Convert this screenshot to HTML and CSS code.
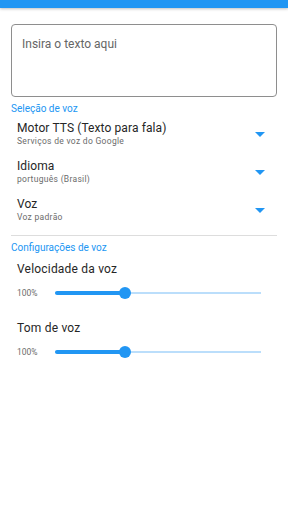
FILE: index.html
```html
<!DOCTYPE html>
<html lang="pt-BR">
<head>
    <meta charset="UTF-8">
    <meta name="viewport" content="width=device-width, initial-scale=1.0">
    <title>Texto para fala</title>
    <link rel="stylesheet" href="styles.css">
</head>
<body>
    <div class="top-bar"></div>

    <div class="content">
        <div class="text-box">
            <span class="placeholder">Insira o texto aqui</span>
        </div>

        <div class="section-title">Seleção de voz</div>

        <div class="select-item">
            <div class="select-text">
                <div class="select-title">Motor TTS (Texto para fala)</div>
                <div class="select-sub">Serviços de voz do Google</div>
            </div>
            <span class="arrow"></span>
        </div>
        <div class="select-item">
            <div class="select-text">
                <div class="select-title">Idioma</div>
                <div class="select-sub">português (Brasil)</div>
            </div>
            <span class="arrow"></span>
        </div>
        <div class="select-item">
            <div class="select-text">
                <div class="select-title">Voz</div>
                <div class="select-sub">Voz padrão</div>
            </div>
            <span class="arrow"></span>
        </div>

        <div class="divider"></div>

        <div class="section-title">Configurações de voz</div>

        <div class="slider-block first">
            <div class="slider-label">Velocidade da voz</div>
            <div class="slider-row">
                <span class="slider-value">100%</span>
                <div class="slider">
                    <div class="track-active" style="width: 34%"></div>
                    <div class="thumb" style="left: 34%"></div>
                </div>
            </div>
        </div>

        <div class="slider-block">
            <div class="slider-label">Tom de voz</div>
            <div class="slider-row">
                <span class="slider-value">100%</span>
                <div class="slider">
                    <div class="track-active" style="width: 34%"></div>
                    <div class="thumb" style="left: 34%"></div>
                </div>
            </div>
        </div>
    </div>
</body>
</html>
```

FILE: styles.css
```css
body {
    margin: 0;
    background: #fff;
    font-family: Roboto, 'Noto Sans', sans-serif;
    color: #212121;
}
.top-bar {
    height: 8px;
    background: #2196f3;
    box-shadow: 0 1px 3px rgba(0,0,0,0.25);
}
.content {
    padding: 16px 11px 0 11px;
}
.text-box {
    height: 73px;
    border: 1px solid #8e8e8e;
    border-radius: 4px;
    padding: 8px 10px;
    box-sizing: border-box;
}
.placeholder {
    font-size: 12px;
    line-height: 16px;
    color: #666;
}
.section-title {
    font-size: 10px;
    line-height: 12px;
    color: #2196f3;
    margin-top: 6px;
}
.select-item {
    display: flex;
    align-items: center;
    padding: 0 12px 0 6px;
    height: 38px;
}
.select-text {
    flex: 1;
}
.select-title {
    font-size: 12px;
    line-height: 15px;
    color: #262626;
    letter-spacing: 0.1px;
}
.select-sub {
    font-size: 8.5px;
    line-height: 11px;
    color: #6b6b6b;
    letter-spacing: 0.3px;
}
.arrow {
    width: 0;
    height: 0;
    border-left: 5px solid transparent;
    border-right: 5px solid transparent;
    border-top: 5px solid #2196f3;
}
.divider {
    height: 1px;
    background: #ddd;
    margin-top: 6px;
}
.slider-block {
    padding: 0 16px 0 6px;
}
.slider-label {
    font-size: 12px;
    line-height: 16px;
    color: #262626;
    letter-spacing: 0.2px;
    margin-top: 15px;
}
.slider-block.first .slider-label {
    margin-top: 7px;
}
.slider-row {
    display: flex;
    align-items: center;
    height: 24px;
    margin-top: 4px;
}
.slider-value {
    font-size: 8.5px;
    color: #6b6b6b;
    width: 38px;
}
.slider {
    position: relative;
    flex: 1;
    height: 2px;
    background: #bbdefb;
}
.track-active {
    position: absolute;
    left: 0;
    top: -1px;
    height: 4px;
    border-radius: 2px;
    background: #2196f3;
}
.thumb {
    position: absolute;
    top: -5px;
    width: 12px;
    height: 12px;
    margin-left: -6px;
    border-radius: 50%;
    background: #2196f3;
}
```
